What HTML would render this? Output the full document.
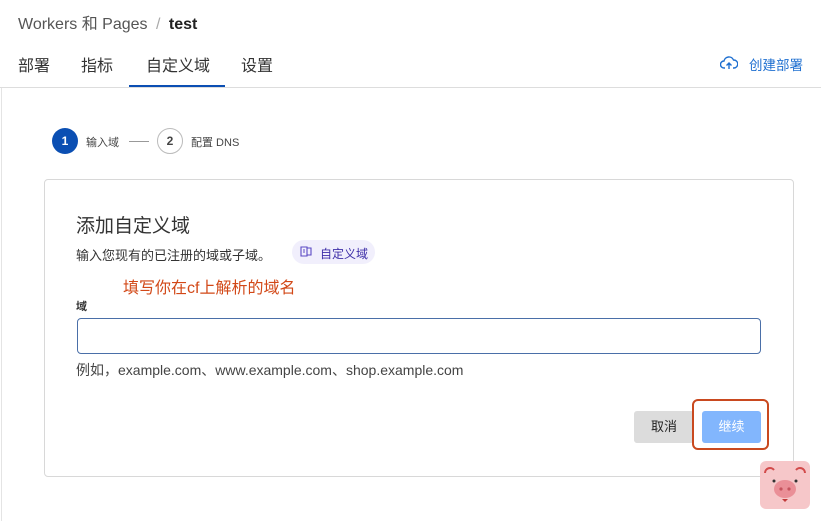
<!DOCTYPE html>
<html><head><meta charset="utf-8"><style>
body{margin:0;width:821px;height:521px;background:#fff;font-family:"Liberation Sans","Noto Sans CJK SC",sans-serif;position:relative;overflow:hidden;color:#333}
.a{position:absolute;white-space:nowrap}
</style></head><body>
<div class="a" style="left:18px;top:10px;font-size:16px;color:#555">Workers 和 Pages <span style="color:#aaa;margin:0 4px">/</span> <b style="color:#222">test</b></div>
<div class="a" style="left:18px;top:52px;font-size:16px;color:#333">部署</div>
<div class="a" style="left:81px;top:52px;font-size:16px;color:#333">指标</div>
<div class="a" style="left:146px;top:52px;font-size:16px;color:#333">自定义域</div>
<div class="a" style="left:241px;top:52px;font-size:16px;color:#333">设置</div>
<div class="a" style="left:129px;top:85px;width:96px;height:2px;background:#0b4fb3"></div>
<div class="a" style="left:0;top:87px;width:821px;height:1px;background:#ddd"></div>
<div class="a" style="left:1px;top:88px;width:1px;height:433px;background:#e4e4e4"></div>
<svg class="a" style="left:720px;top:56px" width="18" height="14" viewBox="0 0 18 14"><path d="M5 12H4a3.5 3.5 0 0 1 0-7 5 5 0 0 1 9.5-1A3.5 3.5 0 0 1 14 12h-1M9 13V7M6.5 9.5 9 7l2.5 2.5" fill="none" stroke="#1e6fd0" stroke-width="1.4"/></svg>
<div class="a" style="left:749px;top:54px;font-size:13.5px;color:#1e6fd0">创建部署</div>
<div class="a" style="left:52px;top:128px;width:26px;height:26px;border-radius:50%;background:#0b4fb3;color:#fff;font-size:12px;font-weight:bold;text-align:center;line-height:26px">1</div>
<div class="a" style="left:86px;top:134px;font-size:11px;color:#444">输入域</div>
<div class="a" style="left:129px;top:141px;width:20px;height:1px;background:#999"></div>
<div class="a" style="left:157px;top:128px;width:24px;height:24px;border-radius:50%;border:1px solid #bbb;color:#444;font-size:12px;font-weight:bold;text-align:center;line-height:24px">2</div>
<div class="a" style="left:191px;top:134px;font-size:11px;color:#444">配置 DNS</div>
<div class="a" style="left:44px;top:179px;width:748px;height:296px;border:1px solid #d8d8d8;border-radius:4px"></div>
<div class="a" style="left:76px;top:211px;font-size:19px;color:#333">添加自定义域</div>
<div class="a" style="left:76px;top:245px;font-size:13px;color:#333">输入您现有的已注册的域或子域。</div>
<div class="a" style="left:292px;top:240px;width:83px;height:24px;border-radius:12px;background:#f1effc"></div>
<svg class="a" style="left:300px;top:246px" width="12" height="11" viewBox="0 0 12 11"><path d="M1 1h6v9H1zM7 2h4v7H7M3 4h2M3 6h2" fill="none" stroke="#5a49c4" stroke-width="1.1"/></svg>
<div class="a" style="left:320px;top:245px;font-size:12px;color:#3e2fa8">自定义域</div>
<div class="a" style="left:123px;top:274px;font-size:16px;color:#d24817">填写你在cf上解析的域名</div>
<div class="a" style="left:76px;top:298px;font-size:11px;font-weight:bold;color:#333">域</div>
<div class="a" style="left:77px;top:318px;width:682px;height:34px;border:1px solid #4a6fa8;border-radius:4px"></div>
<div class="a" style="left:76px;top:360px;font-size:14px;color:#444">例如，example.com、www.example.com、shop.example.com</div>
<div class="a" style="left:634px;top:411px;width:60px;height:32px;background:#dcdcdc;border-radius:3px;font-size:13px;color:#222;text-align:center;line-height:32px">取消</div>
<div class="a" style="left:692px;top:399px;width:77px;height:51px;border:2px solid #c9491f;border-radius:6px;box-sizing:border-box"></div>
<div class="a" style="left:702px;top:411px;width:59px;height:32px;background:#82b6fd;border-radius:3px;font-size:13px;color:#fff;text-align:center;line-height:32px">继续</div>
<div class="a" style="left:760px;top:461px;width:50px;height:48px;background:#f6c7c9;border-radius:6px"></div>
<svg class="a" style="left:760px;top:461px" width="50" height="48" viewBox="0 0 50 48"><path d="M5 12a5 5 0 0 1 9-3M45 12a5 5 0 0 0-9-3" fill="none" stroke="#d24a4a" stroke-width="2"/><circle cx="14" cy="20" r="1.5" fill="#333"/><circle cx="36" cy="20" r="1.5" fill="#333"/><ellipse cx="25" cy="28" rx="11" ry="9" fill="#ea8f97"/><circle cx="21" cy="28" r="1.6" fill="#c6545e"/><circle cx="29" cy="28" r="1.6" fill="#c6545e"/><path d="M22 38h6l-3 3z" fill="#c23a3a"/></svg>
</body></html>
